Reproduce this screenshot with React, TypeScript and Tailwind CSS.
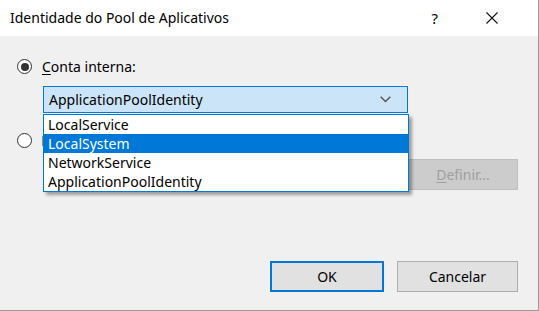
import React from "react";

function Radio({ checked }: { checked: boolean }) {
  return (
    <span className="flex h-[15px] w-[15px] shrink-0 items-center justify-center rounded-full border border-[#333333] bg-white">
      {checked && <span className="h-[8px] w-[8px] rounded-full bg-[#333333]" />}
    </span>
  );
}

export default function App() {
  const items = ["LocalService", "LocalSystem", "NetworkService", "ApplicationPoolIdentity"];
  return (
    <div
      className="relative flex h-[311px] w-[539px] flex-col overflow-hidden border-r border-b border-[#9a9a9a] bg-[#f0f0f0] text-[14px] text-black"
      style={{ fontFamily: '"Segoe UI", "Noto Sans", sans-serif' }}
    >
      {/* title bar */}
      <div className="flex h-[36px] shrink-0 items-center bg-white pl-[10px]">
        <span className="text-[14px] leading-none">Identidade do Pool de Aplicativos</span>
        <span className="ml-auto mr-[48px] text-[15px] leading-none">?</span>
        <svg width="12" height="12" viewBox="0 0 12 12" className="mr-[40px]">
          <path d="M0.5 0.5 L11.5 11.5 M11.5 0.5 L0.5 11.5" stroke="#111" strokeWidth="1.1" />
        </svg>
      </div>

      {/* body */}
      <div className="flex flex-1 flex-col pl-[17px] pr-[20px]">
        <div className="mt-[23px] flex items-center gap-[10px]">
          <Radio checked />
          <span className="leading-none">
            <span className="underline underline-offset-2">C</span>onta interna:
          </span>
        </div>

        <div className="ml-[26px] mt-[12px] flex h-[27px] w-[365px] items-center border border-[#0078d7] bg-[#cce4f7] pl-[5px] pr-[16px]">
          <span className="leading-none">ApplicationPoolIdentity</span>
          <svg width="11" height="7" viewBox="0 0 11 7" className="ml-auto">
            <path d="M0.7 0.7 L5.5 5.5 L10.3 0.7" stroke="#555" strokeWidth="1.4" fill="none" />
          </svg>
        </div>

        <div className="mt-[20px] flex items-center gap-[10px]">
          <Radio checked={false} />
          <span className="h-[10px] w-[2px] bg-[#b08a50]" />
        </div>

        <div className="ml-[26px] mt-[11px] flex items-center gap-[10px]">
          <div className="h-[30px] w-[355px] border border-[#cccccc] bg-[#f0f0f0]" />
          <div className="flex h-[31px] w-[110px] items-center justify-center border border-[#bfbfbf] bg-[#cccccc] text-[#9f9f9f]">
            <span>
              <span className="underline underline-offset-2">D</span>efinir...
            </span>
          </div>
        </div>

        <div className="mt-auto mb-[18px] flex justify-end gap-[13px]">
          <button className="flex h-[31px] w-[114px] items-center justify-center border-2 border-[#0078d7] bg-[#e1e1e1]">
            OK
          </button>
          <button className="flex h-[31px] w-[121px] items-center justify-center border border-[#adadad] bg-[#e1e1e1]">
            Cancelar
          </button>
        </div>
      </div>

      {/* dropdown list overlay */}
      <div className="absolute left-[43px] top-[114px] w-[366px] border border-[#0078d7] bg-white shadow-[3px_3px_3px_rgba(0,0,0,0.35)]">
        {items.map((it) => (
          <div
            key={it}
            className={
              "flex h-[19px] items-center pl-[4px] leading-none " +
              (it === "LocalSystem" ? "bg-[#0078d7] text-white" : "text-black")
            }
          >
            {it}
          </div>
        ))}
      </div>
    </div>
  );
}
